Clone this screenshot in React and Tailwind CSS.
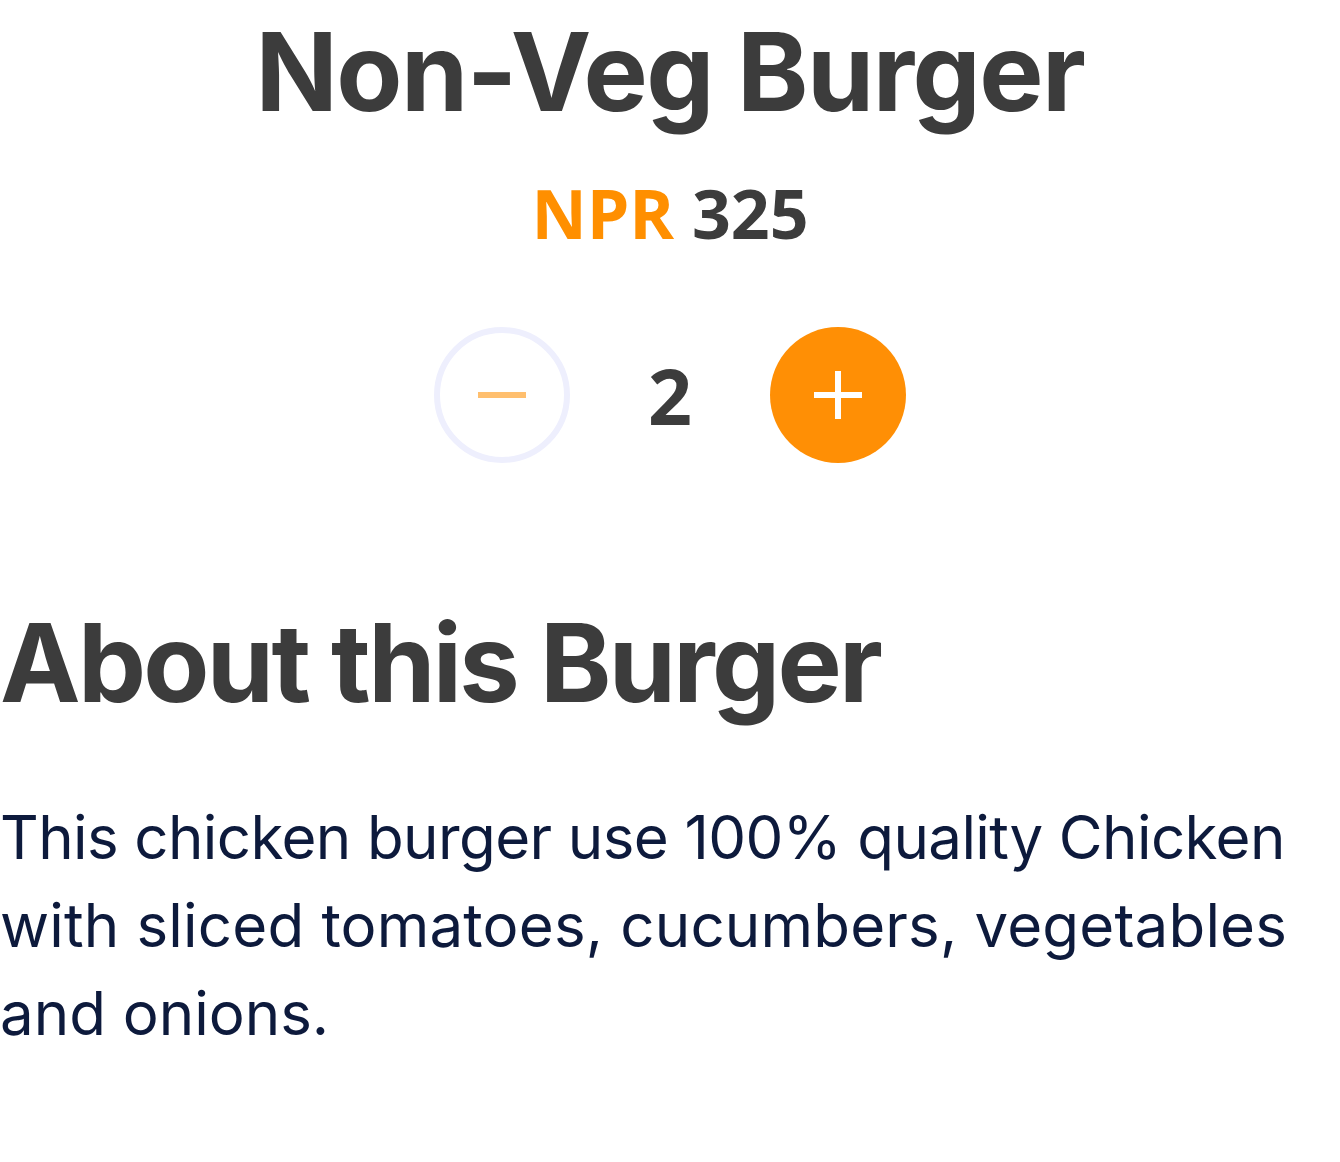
import React from "react";

export default function App() {
  return (
    <div className="w-[1340px] min-h-[1162px] bg-white flex flex-col">
      <h1 className="mt-[18px] text-center text-[108px] leading-none font-bold text-[#3c3c3c] [font-family:Inter,sans-serif] tracking-[-0.014em]">
        Non-Veg Burger
      </h1>
      <div className="mt-[53px] text-center text-[68px] leading-none font-bold [font-family:'Open_Sans',sans-serif]">
        <span className="text-[#ff8f00]">NPR</span>{" "}
        <span className="text-[#3c3c3c]">325</span>
      </div>
      <div className="mt-[80px] flex items-center justify-center">
        <button className="w-[136px] h-[136px] rounded-full border-[6px] border-[#eeeffd] flex items-center justify-center bg-white">
          <span className="block w-[48px] h-[6px] bg-[#ffbf6e]" />
        </button>
        <span className="w-[200px] text-center text-[77px] leading-none font-bold text-[#3c3c3c] [font-family:'Open_Sans',sans-serif]">
          2
        </span>
        <button className="relative w-[136px] h-[136px] rounded-full bg-[#ff8f05] flex items-center justify-center">
          <span className="absolute block w-[48px] h-[6px] bg-white" />
          <span className="absolute block w-[6px] h-[48px] bg-white" />
        </button>
      </div>
      <h2 className="mt-[146px] text-left text-[108px] leading-none font-bold text-[#3c3c3c] [font-family:Inter,sans-serif] tracking-[-0.025em]">
        About this Burger
      </h2>
      <p className="mt-[76px] text-[60px] leading-[88px] font-normal text-[#0d1a3c] [font-family:Inter,sans-serif] whitespace-nowrap">
        <span className="tracking-[-0.01em]">This chicken burger use 100% quality Chicken</span>
        <br />
        <span className="tracking-[0.003em]">with sliced tomatoes, cucumbers, vegetables</span>
        <br />
        and onions.
      </p>
    </div>
  );
}
